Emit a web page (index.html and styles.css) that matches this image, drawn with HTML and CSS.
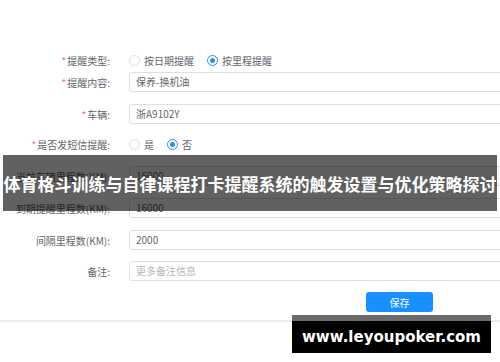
FILE: index.html
```html
<!DOCTYPE html>
<html lang="zh-CN">
<head>
  <meta charset="UTF-8">
  <meta name="viewport" content="width=device-width, initial-scale=1.0">
  <title>提醒设置</title>
  <link rel="stylesheet" href="styles.css">
</head>
<body>
  <form class="form">
    <div class="row row-radio first">
      <label class="label"><span class="req">*</span>提醒类型:</label>
      <div class="control">
        <span class="radio"><i class="dot"></i>按日期提醒</span>
        <span class="radio checked"><i class="dot"></i>按里程提醒</span>
      </div>
    </div>
    <div class="row">
      <label class="label"><span class="req">*</span>提醒内容:</label>
      <div class="input">保养-换机油</div>
    </div>
    <div class="row tight">
      <label class="label"><span class="req">*</span>车辆:</label>
      <div class="input">浙A9102Y</div>
    </div>
    <div class="row row-radio">
      <label class="label"><span class="req">*</span>是否发短信提醒:</label>
      <div class="control">
        <span class="radio"><i class="dot"></i>是</span>
        <span class="radio checked"><i class="dot"></i>否</span>
      </div>
    </div>
    <div class="row">
      <label class="label">当前车辆里程数(KM):</label>
      <div class="input disabled">16000</div>
    </div>
    <div class="row">
      <label class="label">到期提醒里程数(KM):</label>
      <div class="input">16000</div>
    </div>
    <div class="row short">
      <label class="label">间隔里程数(KM):</label>
      <div class="input">2000</div>
    </div>
    <div class="row short">
      <label class="label">备注:</label>
      <div class="input placeholder">更多备注信息</div>
    </div>
    <div class="actions">
      <button type="button" class="btn-save">保存</button>
    </div>
  </form>
  <div class="divider"></div>

  <div class="banner">体育格斗训练与自律课程打卡提醒系统的触发设置与优化策略探讨</div>
  <div class="watermark">www.leyoupoker.com</div>
</body>
</html>
```

FILE: styles.css
```css
:root {
  --blue: #2d8cf0;
  --label: #63666c;
  --border: #dcdfe6;
}

* {
  box-sizing: border-box;
}

body {
  margin: 0;
  width: 500px;
  height: 362px;
  overflow: hidden;
  position: relative;
  background: #fff;
  font-family: "Noto Sans CJK SC", "Noto Sans", sans-serif;
  font-size: 10px;
  color: var(--label);
}

.form {
  padding-top: 50px;
}

.row {
  display: flex;
  align-items: center;
  height: 20px;
  margin-bottom: 12px;
}

.row.first {
  margin-bottom: 2px;
}

.row.tight {
  margin-bottom: 10px;
}

.row.short {
  margin-bottom: 11px;
}

.label {
  width: 110px;
  text-align: right;
  margin-right: 19px;
  flex-shrink: 0;
  white-space: nowrap;
}

.req {
  color: #f56c6c;
  margin-right: 1px;
}

.control {
  display: flex;
  align-items: center;
  gap: 13px;
}

.radio {
  display: flex;
  align-items: center;
  gap: 4px;
}

.dot {
  width: 11px;
  height: 11px;
  border: 1px solid var(--border);
  border-radius: 50%;
  display: inline-block;
  position: relative;
}

.radio.checked .dot {
  border-color: var(--blue);
}

.radio.checked .dot::after {
  content: "";
  position: absolute;
  left: 2px;
  top: 2px;
  width: 5px;
  height: 5px;
  border-radius: 50%;
  background: var(--blue);
}

.input {
  flex: 1;
  height: 20px;
  margin-right: -10px;
  border: 1px solid var(--border);
  border-radius: 3px;
  padding-left: 6px;
  line-height: 18px;
  color: var(--label);
}

.input.disabled {
  background: #f5f7fa;
}

.input.placeholder {
  color: #b4b8c0;
}

.actions {
  height: 20px;
  padding-left: 366px;
  margin-bottom: 8px;
}

.btn-save {
  width: 67px;
  height: 20px;
  border: none;
  border-radius: 3px;
  background: #1890ff;
  color: #fff;
  font-family: inherit;
  font-size: 10px;
  padding: 0;
}

.divider {
  height: 2px;
  background: #eceef3;
}

.banner {
  position: absolute;
  left: 3px;
  top: 155px;
  width: 494px;
  height: 56px;
  background: rgba(0, 0, 0, 0.62);
  color: #fff;
  font-weight: bold;
  font-size: 17px;
  line-height: 58px;
  text-align: center;
  white-space: nowrap;
}

.watermark {
  position: absolute;
  left: 292px;
  top: 315px;
  width: 199px;
  height: 38px;
  background: #000;
  border-top: 6px solid #6b6b6b;
  color: #fff;
  font-family: "DejaVu Sans", sans-serif;
  font-weight: bold;
  font-size: 15px;
  line-height: 32px;
  text-align: center;
}
```
